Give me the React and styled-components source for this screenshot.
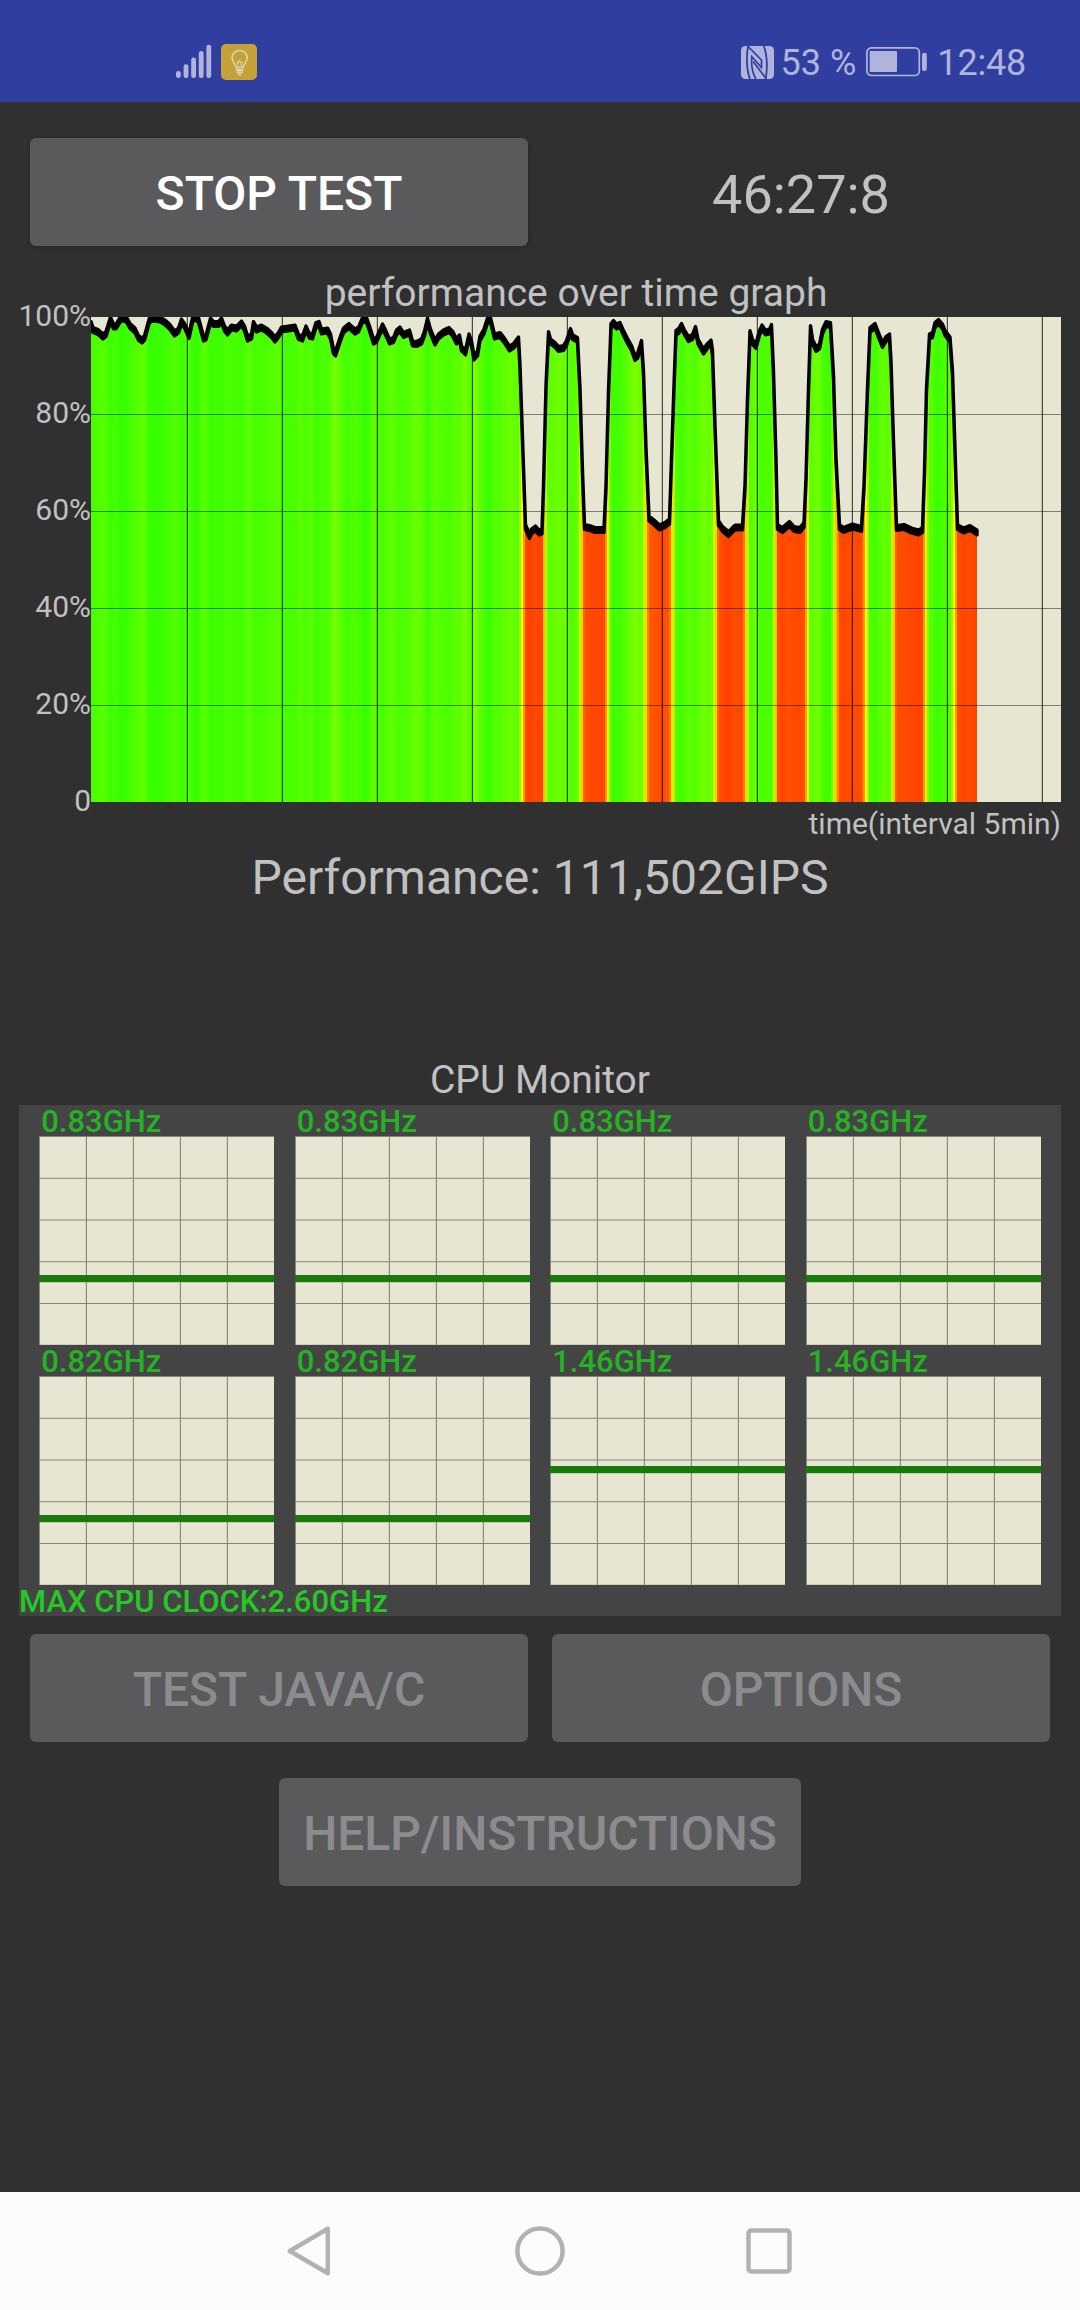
import React from "react";
import styled, { createGlobalStyle } from "styled-components";

const GlobalStyle = createGlobalStyle`
  * {
    box-sizing: border-box;
  }
  body {
    margin: 0;
    background: #303030;
    font-family: Roboto, "Liberation Sans", sans-serif;
    color: #c1c1c1;
  }
`;

const Screen = styled.div`
  width: 1080px;
  height: 2310px;
  display: flex;
  flex-direction: column;
  background: #303030;
  overflow: hidden;
`;

const StatusBar = styled.header`
  height: 102px;
  flex: none;
  display: flex;
  justify-content: space-between;
  align-items: flex-end;
  padding: 0 54px 22px 176px;
  background: #303f9f;
  color: #b0b4dd;
  svg {
    display: block;
  }
`;

const StatusGroup = styled.div`
  height: 36px;
  display: flex;
  align-items: center;
  gap: ${(props) => props.$gap}px;
`;

const StatusText = styled.span`
  font-size: 36px;
  line-height: 36px;
  padding-top: 2px;
  white-space: nowrap;
`;

const BatteryLevel = styled(StatusText)`
  margin-right: 3px;
`;

const Clock = styled(StatusText)`
  margin-left: 4px;
  letter-spacing: -0.2px;
`;

const Main = styled.main`
  flex: 1;
  display: flex;
  flex-direction: column;
  padding-top: 36px;
`;

const ButtonRow = styled.div`
  display: flex;
  justify-content: ${(props) => (props.$center ? "center" : "flex-start")};
  gap: 24px;
  height: 108px;
  padding: 0 30px;
  margin-top: ${(props) => props.$top || 0}px;
`;

const Button = styled.button`
  width: ${(props) => props.$width || 498}px;
  height: 108px;
  border: none;
  border-radius: 6px;
  padding: 3px 0 0;
  background: #5a5a5c;
  color: #fff;
  font-family: inherit;
  font-size: 48px;
  font-weight: 500;
  box-shadow: 0 1px 5px rgba(0, 0, 0, 0.25);
  &:disabled {
    color: #8c8c8e;
    box-shadow: none;
  }
`;

const Timer = styled.div`
  width: 498px;
  text-align: center;
  font-size: 54px;
  line-height: 113px;
`;

const ChartTitle = styled.h2`
  margin: 24px 19px 0 91px;
  height: 47px;
  font-size: 39px;
  font-weight: 400;
  line-height: 46px;
  text-align: center;
`;

const ChartRow = styled.div`
  display: flex;
  height: 485px;
`;

const Axis = styled.div`
  width: 91px;
  height: 515px;
  margin-top: -16px;
  flex: none;
  display: flex;
  flex-direction: column;
  justify-content: space-between;
  align-items: flex-end;
  font-size: 30px;
  line-height: 30px;
`;

const AxisCaption = styled.div`
  padding-right: 19px;
  text-align: right;
  font-size: 30px;
  line-height: 43px;
`;

const Result = styled.div`
  text-align: center;
  font-size: 48px;
  line-height: 65px;
`;

const MonitorTitle = styled.h2`
  margin: 146px 0 0;
  font-size: 39px;
  font-weight: 400;
  line-height: 49px;
  text-align: center;
`;

const Monitor = styled.section`
  width: 1042px;
  height: 511px;
  margin-left: 19px;
  background: #444;
`;

const CoreGrid = styled.div`
  display: grid;
  grid-template-columns: repeat(4, 235px);
  column-gap: 20.5px;
  padding-left: 20.2px;
`;

const CoreLabel = styled.div`
  height: 31px;
  padding-left: 2px;
  font-size: 31px;
  font-weight: 500;
  line-height: 34px;
  color: #25b225;
`;

const MaxClock = styled.div`
  font-size: 31px;
  font-weight: 500;
  line-height: 34px;
  color: #25c825;
`;

const Graph = styled.svg`
  display: block;
  background: #e6e6d2;
`;

const NavBar = styled.nav`
  height: 118px;
  flex: none;
  display: flex;
  align-items: center;
  padding: 0 288px 0 287px;
  justify-content: space-between;
  background: #fcfcfc;
`;

// [x, y] in plot pixels, y measured down from 100%
const SAMPLES = [
  [0, 7], [2, 13], [7, 15], [12, 19.5], [15, 17], [19.5, 2.5], [22.5, 9.5], [25, 9.5],
  [29, 3], [32, 1], [36, 3.5], [39, 9], [44, 13.5], [47.5, 21], [51, 23.5], [53.5, 21],
  [58.5, 3], [62, 1.5], [69, 2.5], [74, 5.5], [78.5, 9.5], [83.5, 16.5], [87.5, 13.5],
  [90.5, 4.5], [94, 9.5], [98, 19], [101.5, 3], [104, 0], [107.5, 3], [112.5, 21.5],
  [115, 20.5], [119.5, 3.5], [122.5, 7], [127.5, 7], [130.5, 3.5], [133.5, 11.5],
  [136.5, 15.5], [140.5, 10.5], [145.5, 11.5], [150.5, 6.5], [153.5, 11.5], [156.5, 21.5],
  [160.5, 19.5], [162.5, 7], [165.5, 12.5], [170.5, 10.5], [175.5, 13.5], [180.5, 18],
  [184, 22.5], [187.5, 18], [190.5, 12.5], [197.5, 11.5], [204, 10.5], [207.5, 20],
  [211.5, 21.5], [215, 11.5], [218.5, 19], [221.5, 19.5], [225, 8], [228, 7], [230.5, 14.5],
  [236.5, 13.5], [239.5, 19.5], [242.5, 34.5], [244.5, 36.5], [249, 23], [252.5, 13.5],
  [258, 9], [260.5, 11.5], [264, 14.5], [267.5, 12.5], [271.5, 3], [275.5, 3], [278.5, 11.5],
  [282.5, 24.5], [285.5, 23], [291.5, 9.5], [294.5, 15.5], [298.5, 24.5], [302.5, 23],
  [305.5, 15.5], [309, 12.5], [312.5, 18], [318.5, 15.5], [321.5, 26.5], [325.5, 27],
  [330.5, 24.5], [333.5, 16.5], [336.5, 3.5], [339.5, 14.5], [344, 25.5], [347.5, 19.5],
  [352.5, 15.5], [358, 13], [361.5, 16.5], [365.5, 24.5], [368.5, 20.5], [370.5, 31.5],
  [374.5, 35.5], [378, 19.5], [380.5, 26.5], [383, 40.5], [386.5, 36.5], [389, 21.5],
  [393, 14.5], [396.5, 3.5], [399.5, 3], [403.5, 19.5], [409, 18], [413, 23], [418.5, 31.5],
  [422.5, 29], [427.5, 22.5], [429, 50], [431.5, 123], [434.5, 210], [438.5, 219],
  [440.5, 214.5], [444.5, 211.5], [448, 215.5], [451, 214.5], [452.5, 170], [455, 70],
  [457.5, 17], [459.5, 24.5], [464, 28], [467.5, 32], [472.5, 31], [475.5, 26], [479.5, 14],
  [481.5, 20], [486.5, 23], [489, 73], [491.5, 156], [493.5, 210], [498.5, 211], [504, 213],
  [513, 213], [515, 170], [517.5, 76], [520, 9], [522.5, 6], [525.5, 9.5], [529, 8],
  [532.5, 16], [536.5, 24], [540.5, 31], [544, 41], [546.5, 39], [550.5, 26], [552.5, 56],
  [555, 133], [558, 201.5], [562.5, 205], [568.5, 210.5], [574, 208], [578.5, 204.5],
  [580.5, 143], [583, 70], [585, 16], [588, 13.5], [590.5, 9], [593.5, 15.5], [597.5, 22],
  [601.5, 20], [604.5, 12], [607, 24.5], [612.5, 34.5], [616.5, 29], [620, 25.5], [621.5, 36],
  [624, 109.5], [627.5, 206], [631.5, 212], [637.5, 217], [644, 210.5], [651.5, 210.5],
  [654, 170], [656.5, 83], [659, 16], [661.5, 25], [665, 29], [668.5, 16], [671, 10.5],
  [674.5, 15.5], [678.5, 14.5], [680.5, 10], [682.5, 56], [685, 143], [686.5, 210],
  [691.5, 213], [698.5, 207], [703, 212], [709, 213], [713, 208], [715, 163], [717.5, 73],
  [719.5, 11], [721.5, 24.5], [725, 32], [728.5, 29.5], [731.5, 14.5], [735, 7], [739.5, 8],
  [742.5, 60], [745, 143], [748.5, 210], [752.5, 213], [761.5, 209.5], [770.5, 212],
  [773, 170], [776.5, 73], [779, 13], [784, 9], [787.5, 18], [791.5, 28], [795, 22],
  [798.5, 19.5], [800, 46], [802.5, 126], [805.5, 211], [813, 210], [820.5, 213.5],
  [827.5, 215.5], [831.5, 213], [833.5, 156], [835.5, 73], [838.5, 19.5], [841.5, 18],
  [844, 8], [847.5, 5], [851.5, 9.5], [854, 16], [859, 22.5], [861.5, 56], [864.5, 150],
  [866.5, 210], [872.5, 213.5], [879, 211], [886, 215.5],
];

const PLOT_HEIGHT = 485;
const COLUMN = 2;

const valueAt = (x) => {
  const i = SAMPLES.findIndex((s) => s[0] >= x);
  if (i <= 0) return SAMPLES[0][1];
  const [x0, y0] = SAMPLES[i - 1];
  const [x1, y1] = SAMPLES[i];
  return y0 + ((y1 - y0) * (x - x0)) / (x1 - x0);
};

const columns = Array.from({ length: 443 }, (_, i) => {
  const y = valueAt(i * COLUMN + 1);
  const drop = (y / PLOT_HEIGHT) * 100;
  return { x: i * COLUMN, y, color: `hsl(${108 - drop * 2.08}, 100%, 50%)` };
});

// the trace is thicker vertically than it is horizontally
const trace =
  "M" +
  SAMPLES.map(([x, y]) => `${x} ${y - 2.4}`).join("L") +
  "L" +
  [...SAMPLES].reverse().map(([x, y]) => `${x} ${y + 2.4}`).join("L") +
  "Z";

const PerformanceGraph = () => (
  <Graph width='970' height='485' viewBox='0 0 970 485'>
    <g shapeRendering='crispEdges'>
      {columns.map((c) => (
        <rect key={c.x} x={c.x} y={c.y} width={COLUMN} height={PLOT_HEIGHT - c.y} fill={c.color} />
      ))}
    </g>
    {[97, 194, 291, 388].map((y) => (
      <rect key={y} x='0' y={y} width='970' height='1' fill='#000' opacity='0.45' />
    ))}
    {Array.from({ length: 10 }, (_, i) => (
      <rect key={i} x={95 * (i + 1) + 0.8} y='0' width='1.1' height='485' fill='#000' opacity='0.75' />
    ))}
    <path d={trace} fill='#000' stroke='#000' strokeWidth='3.4' strokeLinejoin='round' />
  </Graph>
);

const CORES = [
  { clock: "0.83GHz", y: 139 },
  { clock: "0.83GHz", y: 139 },
  { clock: "0.83GHz", y: 139 },
  { clock: "0.83GHz", y: 139 },
  { clock: "0.82GHz", y: 139 },
  { clock: "0.82GHz", y: 139 },
  { clock: "1.46GHz", y: 90 },
  { clock: "1.46GHz", y: 90 },
];

const Core = ({ clock, y }) => (
  <div>
    <CoreLabel>{clock}</CoreLabel>
    <Graph width='235' height='209' viewBox='0 0 235 209'>
      <g stroke='#85857c' strokeWidth='1.1'>
        {[0, 47, 94, 141, 188].map((x) => (
          <line key={x} x1={x + 0.4} x2={x + 0.4} y1='0' y2='209' />
        ))}
        {[0, 41.8, 83.6, 125.4, 167.1, 208.9].map((gy) => (
          <line key={gy} x1='0' x2='236' y1={gy + 0.4} y2={gy + 0.4} />
        ))}
      </g>
      <rect x='0' y={y} width='236' height='7.2' fill='#177a0b' />
    </Graph>
  </div>
);

const SignalIcon = () => (
  <svg width='36' height='36' viewBox='0 0 36 36' fill='currentColor'>
    <rect x='0' y='27' width='4.8' height='7' rx='2.2' />
    <rect x='7.6' y='20.3' width='4.8' height='13.7' rx='2.2' />
    <rect x='15.2' y='13.6' width='4.8' height='20.4' rx='2.2' />
    <rect x='22.8' y='7' width='4.8' height='27' rx='2.2' />
    <rect x='30.4' y='0.7' width='4.8' height='33.3' rx='2.2' />
  </svg>
);

const BulbIcon = () => (
  <svg width='36' height='36' viewBox='0 0 36 36' fill='none' stroke='#dcd6bd'>
    <rect width='36' height='36' rx='5' fill='#c4a238' stroke='none' />
    <path d='M14.8 23.5c0-3.6-3.8-5.4-3.8-9.8a7.6 7.2 0 0 1 15.2 0c0 4.4-3.8 6.2-3.8 9.8z' strokeWidth='1.5' />
    <path d='M17 23l-1-5.2 1.6 1.2 1-3 1 3 1.6-1.2-1 5.2' strokeWidth='1' />
    <path d='M14.8 25.8h7.6M15.4 28.2h6.4M17 30.4h3.2' strokeWidth='1.7' />
  </svg>
);

// rounded tile with the N mark cut out in the bar colour
const NfcIcon = () => (
  <svg width='33' height='33' viewBox='0 0 33 33' fill='none' stroke='#303f9f'>
    <rect width='33' height='33' rx='4.5' fill='#b0b4dd' stroke='none' />
    <path d='M7.2 0C5.2 9 5.4 24 9 33' strokeWidth='1.8' />
    <path d='M7 0.5L20.5 14V21.5L10.8 10.8c-.6 7 0 15 4 22.2' strokeWidth='1.7' />
    <path d='M12.2 15.5L25 32.5' strokeWidth='1.7' />
    <path d='M22.8 0c3.6 9 3.8 24 1.8 33' strokeWidth='1.8' />
  </svg>
);

const BatteryIcon = () => (
  <svg width='61' height='30' viewBox='0 0 61 30' fill='currentColor'>
    <rect x='0.9' y='0.9' width='52.4' height='27.6' rx='4.5' fill='none' stroke='currentColor' strokeWidth='1.7' />
    <rect x='3.7' y='4' width='27.3' height='21' rx='1' />
    <rect x='56' y='5.7' width='4.8' height='18.3' rx='2.2' />
  </svg>
);

const App = () => {
  return (
    <>
      <GlobalStyle />
      <Screen>
        <StatusBar>
          <StatusGroup $gap={9}>
            <SignalIcon />
            <BulbIcon />
          </StatusGroup>
          <StatusGroup $gap={6.5}>
            <NfcIcon />
            <BatteryLevel>53 %</BatteryLevel>
            <BatteryIcon />
            <Clock>12:48</Clock>
          </StatusGroup>
        </StatusBar>
        <Main>
          <ButtonRow>
            <Button>STOP TEST</Button>
            <Timer>46:27:8</Timer>
          </ButtonRow>
          <ChartTitle>performance over time graph</ChartTitle>
          <ChartRow>
            <Axis>
              <span>100%</span>
              <span>80%</span>
              <span>60%</span>
              <span>40%</span>
              <span>20%</span>
              <span>0</span>
            </Axis>
            <PerformanceGraph />
          </ChartRow>
          <AxisCaption>time(interval 5min)</AxisCaption>
          <Result>Performance: 111,502GIPS</Result>
          <MonitorTitle>CPU Monitor</MonitorTitle>
          <Monitor>
            <CoreGrid>
              {CORES.map((core, i) => (
                <Core key={i} {...core} />
              ))}
            </CoreGrid>
            <MaxClock>MAX CPU CLOCK:2.60GHz</MaxClock>
          </Monitor>
          <ButtonRow $top={18}>
            <Button disabled>TEST JAVA/C</Button>
            <Button disabled>OPTIONS</Button>
          </ButtonRow>
          <ButtonRow $top={36} $center>
            <Button disabled $width={522}>
              HELP/INSTRUCTIONS
            </Button>
          </ButtonRow>
        </Main>
        <NavBar>
          <svg width='47' height='50' viewBox='0 0 47 50' fill='none' stroke='#b2b2b2' strokeWidth='4.5' strokeLinejoin='round'>
            <path d='M40.8 2.8v44.4L2.8 25z' />
          </svg>
          <svg width='50' height='50' viewBox='0 0 50 50' fill='none' stroke='#b2b2b2' strokeWidth='4.5'>
            <circle cx='25' cy='25' r='22.6' />
          </svg>
          <svg width='46' height='46' viewBox='0 0 46 46' fill='none' stroke='#b2b2b2' strokeWidth='4.5'>
            <rect x='2.5' y='2.5' width='41' height='41' rx='2.5' />
          </svg>
        </NavBar>
      </Screen>
    </>
  );
};
export default App;
